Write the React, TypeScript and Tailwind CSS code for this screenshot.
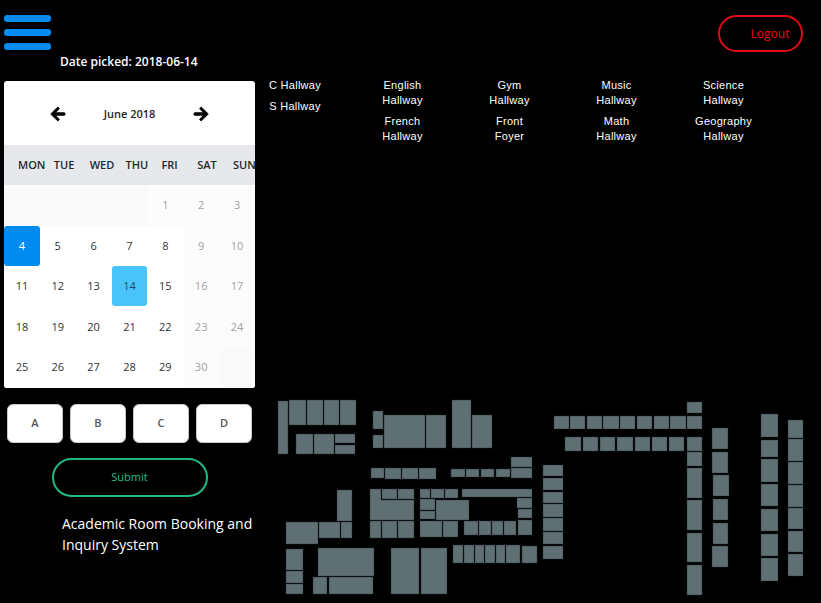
import { FaArrowLeft, FaArrowRight } from "react-icons/fa";

const WEEKDAYS = ["MON", "TUE", "WED", "THU", "FRI", "SAT", "SUN"];

const WEEKS: (number | null)[][] = [
  [null, null, null, null, 1, 2, 3],
  [4, 5, 6, 7, 8, 9, 10],
  [11, 12, 13, 14, 15, 16, 17],
  [18, 19, 20, 21, 22, 23, 24],
  [25, 26, 27, 28, 29, 30, null],
];

const TODAY = 4;
const PICKED = 14;

const HALLWAYS = [
  ["C Hallway", "S Hallway"],
  ["English Hallway", "French Hallway"],
  ["Gym Hallway", "Front Foyer"],
  ["Music Hallway", "Math Hallway"],
  ["Science Hallway", "Geography Hallway"],
];

// Each room is left, top, right, bottom in floor plan units.
const ROOMS: [number, number, number, number][] = [
  [278, 401, 288, 454],
  [289, 400, 306, 425], [307, 400, 323, 425], [324, 400, 339, 425], [340, 400, 356, 425],
  [296, 434, 313, 454], [314, 434, 334, 454], [335, 434, 355, 443], [335, 445, 355, 454],
  [373, 411, 383, 429], [373, 435, 383, 448], [384, 415, 425, 448], [426, 415, 446, 448],
  [452, 400, 471, 448], [472, 415, 492, 448],
  [371, 468, 384, 478], [385, 468, 401, 479], [402, 468, 418, 479], [419, 468, 436, 479],
  [451, 469, 465, 477], [466, 469, 479, 477], [481, 469, 494, 477], [496, 469, 510, 477],
  [511, 468, 532, 478], [511, 457, 532, 467],
  [382, 489, 397, 499], [398, 489, 414, 499],
  [370, 521, 381, 538], [382, 521, 397, 538], [398, 521, 414, 538],
  [420, 489, 430, 498], [431, 489, 444, 498], [445, 489, 458, 498],
  [420, 499, 435, 510], [420, 511, 435, 519], [436, 500, 469, 520],
  [420, 521, 442, 537], [443, 521, 458, 537],
  [462, 489, 532, 497], [517, 498, 532, 508], [518, 509, 532, 518],
  [464, 521, 478, 535], [479, 521, 491, 535], [492, 521, 503, 535], [504, 521, 516, 535], [518, 520, 532, 535],
  [453, 545, 463, 563], [464, 545, 474, 563], [475, 545, 484, 563], [485, 545, 495, 563],
  [496, 545, 505, 563], [506, 545, 520, 563], [522, 546, 537, 563],
  [543, 465, 563, 476], [543, 478, 563, 490], [543, 492, 563, 503], [543, 504, 563, 517],
  [543, 518, 563, 531], [543, 532, 563, 544], [543, 546, 563, 559],
  [391, 548, 419, 594], [421, 548, 447, 594],
  [337, 490, 352, 521], [286, 522, 318, 544], [319, 522, 340, 538], [341, 522, 352, 538],
  [286, 549, 303, 570], [286, 571, 303, 583], [286, 584, 303, 594],
  [318, 548, 374, 576], [313, 577, 327, 594], [329, 577, 373, 594],
  [554, 416, 569, 429], [570, 416, 585, 429], [587, 416, 602, 429], [603, 416, 619, 429],
  [620, 416, 635, 429], [637, 416, 652, 429], [654, 416, 669, 429], [670, 416, 686, 429],
  [687, 416, 702, 429], [687, 402, 702, 413],
  [565, 437, 581, 451], [583, 437, 598, 451], [600, 437, 615, 451], [617, 437, 633, 451],
  [635, 437, 650, 451], [652, 437, 667, 451], [669, 437, 684, 451], [687, 437, 702, 451],
  [687, 452, 702, 466], [687, 468, 702, 498], [687, 500, 702, 530], [687, 533, 702, 562], [687, 565, 702, 595],
  [712, 428, 728, 449], [712, 452, 728, 473], [713, 475, 729, 496], [713, 499, 728, 520],
  [713, 523, 728, 544], [712, 546, 728, 567],
  [761, 414, 778, 437], [761, 440, 778, 457], [761, 459, 778, 482], [761, 484, 778, 506],
  [761, 509, 778, 531], [761, 534, 778, 556], [761, 558, 778, 581],
  [788, 420, 803, 438], [788, 439, 803, 461], [788, 462, 803, 484], [788, 485, 803, 507],
  [788, 508, 803, 529], [788, 531, 803, 552], [788, 554, 803, 576],
];

function dayStyle(day: number, column: number) {
  if (day === TODAY) return "bg-[#008bf0] text-white rounded-[3px]";
  if (day === PICKED) return "bg-[#48c4fb] text-[#1d4a63] rounded-[3px]";
  if (column > 4 || day === 1) return "text-[#a2a2a2]";
  return "text-[#303437]";
}

function cellStyle(day: number | null, column: number) {
  if (day === null) return "bg-[#fafafa]";
  if (column > 4 || day === 1) return "bg-[#fcfcfc]";
  return "bg-white";
}

function Calendar() {
  return (
    <section className="overflow-hidden rounded-[3px] bg-white text-[11px]">
      <div className="flex h-16 items-center justify-between px-[46px] pt-[2px] text-[#1f2429]">
        <button type="button" aria-label="Previous month" className="text-black">
          <FaArrowLeft size={16} stroke="currentColor" strokeWidth={30} />
        </button>
        <h2 className="font-semibold">June 2018</h2>
        <button type="button" aria-label="Next month" className="text-black">
          <FaArrowRight size={16} stroke="currentColor" strokeWidth={30} />
        </button>
      </div>
      <table className="h-[243px] w-full table-fixed border-collapse">
        <thead>
          <tr className="h-10 bg-[#e6e8eb]">
            {WEEKDAYS.map((name) => (
              <th key={name} scope="col" className="p-0 pl-[14px] text-left font-semibold whitespace-nowrap text-[#24282c]">
                {name}
              </th>
            ))}
          </tr>
        </thead>
        <tbody>
          {WEEKS.map((week, row) => (
            <tr key={row}>
              {week.map((day, column) => (
                <td key={column} className={`h-10 p-0 ${cellStyle(day, column)}`}>
                  {day !== null && (
                    <button type="button" className={`block h-10 w-full ${dayStyle(day, column)}`}>
                      {day}
                    </button>
                  )}
                </td>
              ))}
            </tr>
          ))}
        </tbody>
      </table>
    </section>
  );
}

function FloorPlan() {
  return (
    <svg
      viewBox="255 395 566 208"
      className="mt-auto block w-full"
      role="img"
      aria-label="Floor plan"
      fill="#5f7072"
      stroke="#293536"
      strokeWidth="0.4"
    >
      <polygon points="370,489 381,489 381,500 414,500 414,520 370,520" />
      {ROOMS.map(([left, top, right, bottom]) => (
        <rect key={`${left}-${top}`} x={left} y={top} width={right - left} height={bottom - top} />
      ))}
    </svg>
  );
}

export default function App() {
  return (
    <div className="flex min-h-screen flex-col bg-black font-['Open_Sans','Noto_Sans',sans-serif] text-white">
      <header className="flex items-start justify-between pt-[15px] pr-[18px] pb-[6px] pl-1">
        <div>
          <button type="button" aria-label="Menu" className="flex w-[47px] flex-col gap-[7px]">
            <span className="h-[7px] w-full rounded-[3px] bg-[#058af0]" />
            <span className="h-[7px] w-full rounded-[3px] bg-[#058af0]" />
            <span className="h-[7px] w-full rounded-[3px] bg-[#058af0]" />
          </button>
          <p className="pt-[2px] pl-14 text-[12px] leading-5 font-semibold">Date picked: 2018-06-14</p>
        </div>
        <button type="button" className="h-[37px] w-[85px] rounded-full border-2 border-[#e00b12] pl-[19px] text-[12px] text-[#f0060d]">
          Logout
        </button>
      </header>

      <main className="flex flex-1">
        <aside className="w-[255px] shrink-0 pt-[3px] pl-1">
          <Calendar />
          <div className="grid grid-cols-4 gap-[7px] px-[3px] pt-4">
            {["A", "B", "C", "D"].map((block) => (
              <button key={block} type="button" className="h-[39px] rounded-md border border-[#c8c8c8] bg-white text-[11px] font-semibold text-[#555]">
                {block}
              </button>
            ))}
          </div>
          <div className="flex justify-center pt-[15px]">
            <button type="button" className="h-[39px] w-[156px] rounded-full border-2 border-[#20b887] text-[11px] font-medium text-[#20c08d]">
              Submit
            </button>
          </div>
          <p className="pt-4 pl-[58px] text-[14px] leading-[21px]">Academic Room Booking and Inquiry System</p>
        </aside>

        <div className="flex min-w-0 flex-1 flex-col">
          <nav
            aria-label="Hallways"
            className="grid grid-cols-[94px_1fr_1fr_1fr_1fr] pr-[44px] text-center font-['Liberation_Sans',Arial,sans-serif] text-[11px] leading-[15px] font-medium tracking-wide"
          >
            {HALLWAYS.map((names, column) => (
              <ul key={column} className={`flex flex-col gap-[6px] ${column === 0 ? "pr-[14px]" : "px-6"}`}>
                {names.map((name) => (
                  <li key={name}>
                    <button type="button">{name}</button>
                  </li>
                ))}
              </ul>
            ))}
          </nav>
          <FloorPlan />
        </div>
      </main>
    </div>
  );
}
